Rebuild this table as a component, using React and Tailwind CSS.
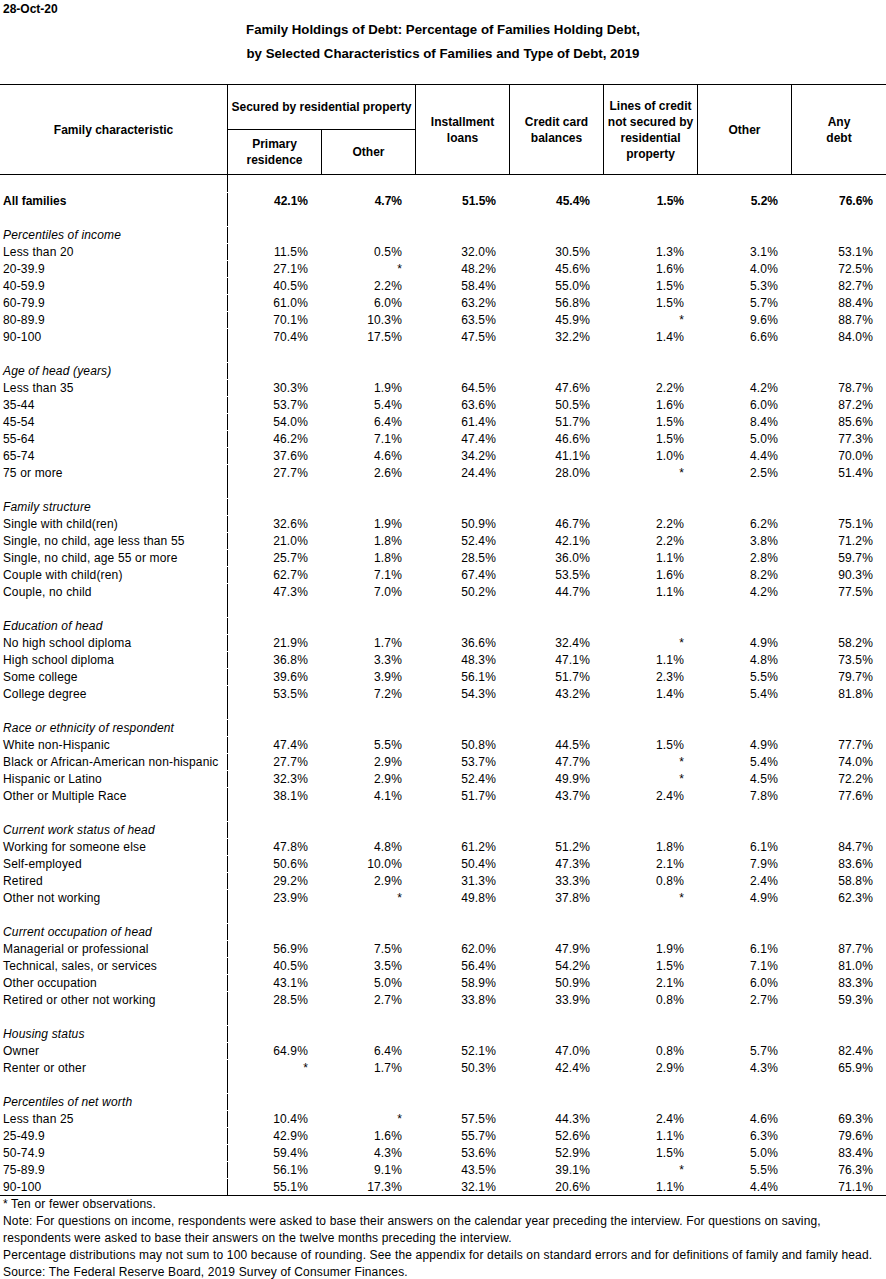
const groups = [
  {
    title: 'Percentiles of income',
    rows: [
      ['Less than 20', '11.5%', '0.5%', '32.0%', '30.5%', '1.3%', '3.1%', '53.1%'],
      ['20-39.9', '27.1%', '*', '48.2%', '45.6%', '1.6%', '4.0%', '72.5%'],
      ['40-59.9', '40.5%', '2.2%', '58.4%', '55.0%', '1.5%', '5.3%', '82.7%'],
      ['60-79.9', '61.0%', '6.0%', '63.2%', '56.8%', '1.5%', '5.7%', '88.4%'],
      ['80-89.9', '70.1%', '10.3%', '63.5%', '45.9%', '*', '9.6%', '88.7%'],
      ['90-100', '70.4%', '17.5%', '47.5%', '32.2%', '1.4%', '6.6%', '84.0%'],
    ],
  },
  {
    title: 'Age of head (years)',
    rows: [
      ['Less than 35', '30.3%', '1.9%', '64.5%', '47.6%', '2.2%', '4.2%', '78.7%'],
      ['35-44', '53.7%', '5.4%', '63.6%', '50.5%', '1.6%', '6.0%', '87.2%'],
      ['45-54', '54.0%', '6.4%', '61.4%', '51.7%', '1.5%', '8.4%', '85.6%'],
      ['55-64', '46.2%', '7.1%', '47.4%', '46.6%', '1.5%', '5.0%', '77.3%'],
      ['65-74', '37.6%', '4.6%', '34.2%', '41.1%', '1.0%', '4.4%', '70.0%'],
      ['75 or more', '27.7%', '2.6%', '24.4%', '28.0%', '*', '2.5%', '51.4%'],
    ],
  },
  {
    title: 'Family structure',
    rows: [
      ['Single with child(ren)', '32.6%', '1.9%', '50.9%', '46.7%', '2.2%', '6.2%', '75.1%'],
      ['Single, no child, age less than 55', '21.0%', '1.8%', '52.4%', '42.1%', '2.2%', '3.8%', '71.2%'],
      ['Single, no child, age 55 or more', '25.7%', '1.8%', '28.5%', '36.0%', '1.1%', '2.8%', '59.7%'],
      ['Couple with child(ren)', '62.7%', '7.1%', '67.4%', '53.5%', '1.6%', '8.2%', '90.3%'],
      ['Couple, no child', '47.3%', '7.0%', '50.2%', '44.7%', '1.1%', '4.2%', '77.5%'],
    ],
  },
  {
    title: 'Education of head',
    rows: [
      ['No high school diploma', '21.9%', '1.7%', '36.6%', '32.4%', '*', '4.9%', '58.2%'],
      ['High school diploma', '36.8%', '3.3%', '48.3%', '47.1%', '1.1%', '4.8%', '73.5%'],
      ['Some college', '39.6%', '3.9%', '56.1%', '51.7%', '2.3%', '5.5%', '79.7%'],
      ['College degree', '53.5%', '7.2%', '54.3%', '43.2%', '1.4%', '5.4%', '81.8%'],
    ],
  },
  {
    title: 'Race or ethnicity of respondent',
    rows: [
      ['White non-Hispanic', '47.4%', '5.5%', '50.8%', '44.5%', '1.5%', '4.9%', '77.7%'],
      ['Black or African-American non-hispanic', '27.7%', '2.9%', '53.7%', '47.7%', '*', '5.4%', '74.0%'],
      ['Hispanic or Latino', '32.3%', '2.9%', '52.4%', '49.9%', '*', '4.5%', '72.2%'],
      ['Other or Multiple Race', '38.1%', '4.1%', '51.7%', '43.7%', '2.4%', '7.8%', '77.6%'],
    ],
  },
  {
    title: 'Current work status of head',
    rows: [
      ['Working for someone else', '47.8%', '4.8%', '61.2%', '51.2%', '1.8%', '6.1%', '84.7%'],
      ['Self-employed', '50.6%', '10.0%', '50.4%', '47.3%', '2.1%', '7.9%', '83.6%'],
      ['Retired', '29.2%', '2.9%', '31.3%', '33.3%', '0.8%', '2.4%', '58.8%'],
      ['Other not working', '23.9%', '*', '49.8%', '37.8%', '*', '4.9%', '62.3%'],
    ],
  },
  {
    title: 'Current occupation of head',
    rows: [
      ['Managerial or professional', '56.9%', '7.5%', '62.0%', '47.9%', '1.9%', '6.1%', '87.7%'],
      ['Technical, sales, or services', '40.5%', '3.5%', '56.4%', '54.2%', '1.5%', '7.1%', '81.0%'],
      ['Other occupation', '43.1%', '5.0%', '58.9%', '50.9%', '2.1%', '6.0%', '83.3%'],
      ['Retired or other not working', '28.5%', '2.7%', '33.8%', '33.9%', '0.8%', '2.7%', '59.3%'],
    ],
  },
  {
    title: 'Housing status',
    rows: [
      ['Owner', '64.9%', '6.4%', '52.1%', '47.0%', '0.8%', '5.7%', '82.4%'],
      ['Renter or other', '*', '1.7%', '50.3%', '42.4%', '2.9%', '4.3%', '65.9%'],
    ],
  },
  {
    title: 'Percentiles of net worth',
    rows: [
      ['Less than 25', '10.4%', '*', '57.5%', '44.3%', '2.4%', '4.6%', '69.3%'],
      ['25-49.9', '42.9%', '1.6%', '55.7%', '52.6%', '1.1%', '6.3%', '79.6%'],
      ['50-74.9', '59.4%', '4.3%', '53.6%', '52.9%', '1.5%', '5.0%', '83.4%'],
      ['75-89.9', '56.1%', '9.1%', '43.5%', '39.1%', '*', '5.5%', '76.3%'],
      ['90-100', '55.1%', '17.3%', '32.1%', '20.6%', '1.1%', '4.4%', '71.1%'],
    ],
  },
];

const allFamilies = ['All families', '42.1%', '4.7%', '51.5%', '45.4%', '1.5%', '5.2%', '76.6%'];

const Row = ({ cells, bold }) => (
  <div className={`flex h-[17px] pt-px leading-[17px] ${bold ? 'font-bold' : 'tracking-[0.16px]'}`}>
    <div className="w-[228px] shrink-0 border-r border-black pl-[3px] whitespace-nowrap">{cells[0]}</div>
    {cells.slice(1).map((c, i) => (
      <div key={i} className={`${i === 6 ? 'w-[95px]' : 'w-[94px]'} shrink-0 pr-[14px] text-right`}>
        {c}
      </div>
    ))}
  </div>
);

const Blank = () => (
  <div className="flex h-[17px]">
    <div className="w-[228px] shrink-0 border-r border-black" />
  </div>
);

const App = () => {
  return (
    <div className="w-[886px] bg-white text-[12px] text-black" style={{ fontFamily: '"Liberation Sans", Arial, sans-serif' }}>
      <div className="h-[18px] pl-[3px] font-bold leading-[18px]">28-Oct-20</div>
      <div className="text-center text-[13.25px] font-bold leading-[24px]">
        <div>Family Holdings of Debt: Percentage of Families Holding Debt,</div>
        <div>by Selected Characteristics of Families and Type of Debt, 2019</div>
      </div>
      <div className="h-[18px]" />

      <div className="border-t border-b border-black">
        <div className="flex h-[89px] font-bold leading-[16px]">
          <div className="flex w-[228px] shrink-0 items-center justify-center border-r border-black">Family characteristic</div>
          <div className="flex w-[188px] shrink-0 flex-col border-r border-black">
            <div className="flex h-[45px] items-center justify-center border-b border-black">Secured by residential property</div>
            <div className="flex flex-1">
              <div className="flex w-[94px] items-center justify-center border-r border-black text-center">Primary<br />residence</div>
              <div className="flex flex-1 items-center justify-center">Other</div>
            </div>
          </div>
          <div className="flex w-[94px] shrink-0 items-center justify-center border-r border-black text-center">Installment<br />loans</div>
          <div className="flex w-[94px] shrink-0 items-center justify-center border-r border-black text-center">Credit card<br />balances</div>
          <div className="flex w-[94px] shrink-0 items-center justify-center border-r border-black text-center">Lines of credit<br />not secured by<br />residential<br />property</div>
          <div className="flex w-[94px] shrink-0 items-center justify-center border-r border-black">Other</div>
          <div className="flex flex-1 items-center justify-center text-center">Any<br />debt</div>
        </div>
      </div>

      <div className="border-b border-black">
        <Blank />
        <Row cells={allFamilies} bold />
        {groups.map((g) => (
          <div key={g.title}>
            <Blank />
            <div className="flex h-[17px] pt-px leading-[17px] tracking-[0.16px]">
              <div className="w-[228px] shrink-0 border-r border-black pl-[3px] italic whitespace-nowrap">{g.title}</div>
            </div>
            {g.rows.map((r) => (
              <Row key={r[0]} cells={r} />
            ))}
          </div>
        ))}
      </div>

      <div className="pl-[3px] leading-[17px] tracking-[0.16px]">
        <div>* Ten or fewer observations.</div>
        <div>Note: For questions on income, respondents were asked to base their answers on the calendar year preceding the interview. For questions on saving,</div>
        <div>respondents were asked to base their answers on the twelve months preceding the interview.</div>
        <div>Percentage distributions may not sum to 100 because of rounding. See the appendix for details on standard errors and for definitions of family and family head.</div>
        <div>Source: The Federal Reserve Board, 2019 Survey of Consumer Finances.</div>
      </div>
    </div>
  );
};

export default App;
